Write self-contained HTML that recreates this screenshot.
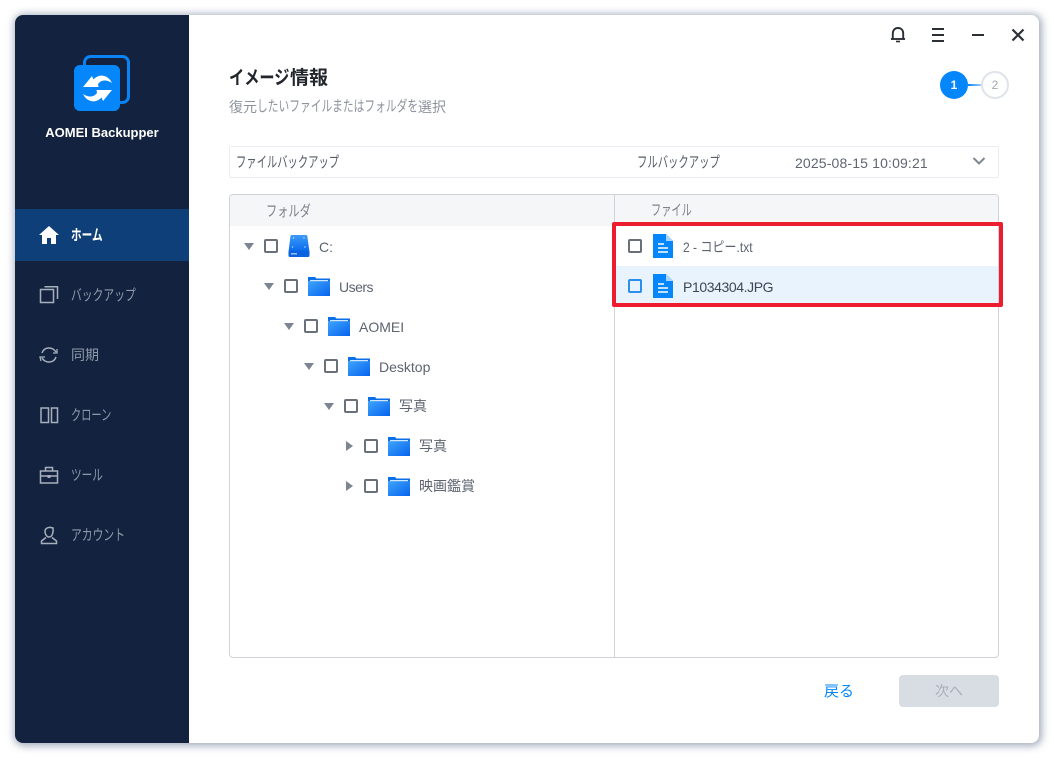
<!DOCTYPE html>
<html lang="ja">
<head>
<meta charset="utf-8">
<title>AOMEI Backupper</title>
<style>
html,body{margin:0;padding:0;width:1054px;height:758px;overflow:hidden;background:#fff;}
body{position:relative;font-family:"Liberation Sans","Noto Sans CJK JP",sans-serif;}
.t{position:absolute;white-space:nowrap;line-height:20px;height:20px;transform-origin:left center;}
.abs{position:absolute;}
#win{position:absolute;left:15px;top:15px;width:1024px;height:728px;border-radius:8px;background:#fff;box-shadow:1px 1px 8px 2px rgba(90,105,135,.55);overflow:hidden;}
#side{position:absolute;left:15px;top:15px;width:174px;height:728px;background:#13233f;border-radius:8px 0 0 8px;}
#active{position:absolute;left:15px;top:209px;width:174px;height:52px;background:#0e3f78;}
.nav{color:#8f99aa;font-size:15px;left:71px;}
.cb{position:absolute;width:10px;height:10px;border:2px solid #6a707a;border-radius:2px;background:#fff;}
.tr{position:absolute;width:0;height:0;}
.down{border-left:5.5px solid transparent;border-right:5.5px solid transparent;border-top:7px solid #7c8591;}
.right{border-top:5px solid transparent;border-bottom:5px solid transparent;border-left:7px solid #7c8591;}
.lbl{font-size:14px;color:#5d6470;}
</style>
</head>
<body>
<div id="win"></div>
<div id="side"></div>
<div id="active"></div>

<!-- logo -->
<svg class="abs" style="left:70px;top:52px" width="64" height="62" viewBox="0 0 64 62">
<rect x="14.5" y="4.500" width="44" height="46" rx="6" fill="none" stroke="#0a84f5" stroke-width="3"/>
<rect x="4" y="13" width="46" height="46" rx="6" fill="#0587fb"/>
<path d="M13 35 L22 24 L23.500 27.500 C29 21.500 38 22.500 42 31 C36 27 31 28 28 32 L28.500 35 Z" fill="#fff"/>
<path d="M13 35 L22 24 L23.500 27.500 C29 21.500 38 22.500 42 31 C36 27 31 28 28 32 L28.500 35 Z" fill="#fff" transform="rotate(180 27.5 36.5)"/>
</svg>
<div class="t" style="left:15px;width:174px;text-align:center;top:123px;color:#fff;font-size:13px;font-weight:bold;">AOMEI Backupper</div>

<!-- nav icons -->
<svg class="abs" style="left:38px;top:225px" width="22" height="20" viewBox="0 0 22 20"><path d="M11 1 L21 10 L18 10 L18 19 L13 19 L13 13 L9 13 L9 19 L4 19 L4 10 L1 10 Z" fill="#fff"/></svg>
<div class="t" style="left:71px;top:226px;color:#fff;font-size:15px;font-weight:bold;transform:scaleX(.71);">ホーム</div>

<svg class="abs" style="left:38px;top:284px" width="22" height="22" viewBox="0 0 22 22" fill="none" stroke="#a7afbc" stroke-width="1.500"><rect x="2.500" y="5.500" width="13" height="13"/><path d="M6.500 2.800 H19.500 V15"/></svg>
<div class="t nav" style="top:286px;transform:scaleX(.72);">バックアップ</div>

<svg class="abs" style="left:38px;top:344px" width="22" height="22" viewBox="0 0 22 22" fill="none" stroke="#a7afbc" stroke-width="1.500"><path d="M4 9 C6 3 14 2 18 8"/><path d="M18 13 C16 19 8 20 4 14"/><path d="M15 9 L19 9 L19 5" stroke-width="1.300"/><path d="M7 13 L2 13 L3 17" stroke-width="1.300"/></svg>
<div class="t nav" style="top:345px;font-size:14px;">同期</div>

<svg class="abs" style="left:38px;top:404px" width="22" height="22" viewBox="0 0 22 22" fill="none" stroke="#a7afbc" stroke-width="1.500"><rect x="3" y="4" width="7.500" height="14.500"/><rect x="13.500" y="4" width="6" height="14.500"/></svg>
<div class="t nav" style="top:406px;transform:scaleX(.68);">クローン</div>

<svg class="abs" style="left:38px;top:464px" width="22" height="22" viewBox="0 0 22 22" fill="none" stroke="#a7afbc" stroke-width="1.500"><rect x="2.500" y="7" width="17" height="12"/><path d="M7.500 7 V3.500 H14.500 V7"/><path d="M2.500 12 H19.500"/><rect x="9.500" y="11" width="3" height="3" fill="#a7afbc" stroke="none"/></svg>
<div class="t nav" style="top:466px;transform:scaleX(.71);">ツール</div>

<svg class="abs" style="left:38px;top:524px" width="22" height="22" viewBox="0 0 22 22" fill="none" stroke="#a7afbc" stroke-width="1.500"><path d="M7 7 C7 4.500 10 3 13 3.500 L15 4 C15.500 8 14.500 13 11 13 C8.500 13 7 10 7 7 Z"/><path d="M8 13.500 L3.500 17 V19.500 H18.500 V17 L14 13.500"/></svg>
<div class="t nav" style="top:526px;transform:scaleX(.72);">アカウント</div>

<!-- title bar icons -->
<svg class="abs" style="left:888px;top:25px" width="20" height="20" viewBox="0 0 20 20" fill="none" stroke="#2b2f36" stroke-width="1.900"><path d="M4.800 13.500 V8.500 C4.800 5 7 3 10 3 C13 3 15.200 5 15.200 8.500 V13.500"/><path d="M3 14 H17"/><path d="M8 16.500 H12" stroke-width="1.600"/></svg>
<svg class="abs" style="left:928px;top:25px" width="20" height="20" viewBox="0 0 20 20" fill="#2b2f36"><rect x="4" y="3" width="12" height="2"/><rect x="4" y="9" width="12" height="2"/><rect x="4" y="15" width="12" height="2"/></svg>
<svg class="abs" style="left:968px;top:25px" width="20" height="20" viewBox="0 0 20 20" fill="#2b2f36"><rect x="4" y="9" width="12" height="2"/></svg>
<svg class="abs" style="left:1008px;top:25px" width="20" height="20" viewBox="0 0 20 20" fill="none" stroke="#2b2f36" stroke-width="2.200"><path d="M4.500 4.500 L15.500 15.500 M15.500 4.500 L4.500 15.500"/></svg>

<!-- heading -->
<div class="t" style="left:229px;top:69px;font-size:19px;font-weight:bold;color:#22262c;transform:scaleX(.8);">イメージ</div>
<div class="t" style="left:290px;top:69px;font-size:19px;font-weight:bold;color:#22262c;">情報</div>
<div class="t" style="left:229px;top:97px;font-size:14px;color:#8e949d;">復元</div>
<div class="t" style="left:257px;top:97px;font-size:15px;color:#8e949d;transform:scaleX(.716);">したいファイルまたはフォルダを</div>
<div class="t" style="left:418px;top:97px;font-size:14px;color:#8e949d;">選択</div>

<!-- steps -->
<div class="abs" style="left:968px;top:84px;width:14px;height:2px;background:linear-gradient(90deg,#0587fb,#a9d3fb);"></div>
<div class="abs" style="left:940px;top:71px;width:28px;height:28px;border-radius:50%;background:#0587fb;color:#fff;font-size:12px;font-weight:bold;line-height:28px;text-align:center;">1</div>
<div class="abs" style="left:981px;top:71px;width:24px;height:24px;border-radius:50%;border:2px solid #dfe3ea;background:#fff;color:#a2a8b3;font-size:12px;line-height:24px;text-align:center;">2</div>

<!-- info row -->
<div class="abs" style="left:229px;top:146px;width:768px;height:30px;border:1px solid #e9ecf1;border-radius:2px;"></div>
<div class="t" style="left:236px;top:153px;font-size:15px;color:#555c67;transform:scaleX(.687);">ファイルバックアップ</div>
<div class="t" style="left:637px;top:153px;font-size:15px;color:#555c67;transform:scaleX(.69);">フルバックアップ</div>
<div class="t" style="left:795px;top:153px;font-size:14px;color:#5f6672;letter-spacing:.15px;">2025-08-15 10:09:21</div>
<svg class="abs" style="left:971px;top:155px" width="16" height="14" viewBox="0 0 16 14" fill="none" stroke="#7f8792" stroke-width="2"><path d="M2.500 3 L8 8.500 L13.500 3"/></svg>

<!-- panel -->
<div class="abs" style="left:229px;top:194px;width:768px;height:462px;border:1px solid #cfd2d6;border-radius:4px;"></div>
<div class="abs" style="left:230px;top:195px;width:768px;height:31px;background:#f5f6f7;border-radius:4px 4px 0 0;"></div>
<div class="abs" style="left:614px;top:195px;width:1px;height:462px;background:#cfd2d6;"></div>
<div class="t" style="left:266px;top:202px;font-size:15px;color:#7c828c;transform:scaleX(.747);">フォルダ</div>
<div class="t" style="left:651px;top:201px;font-size:15px;color:#7c828c;transform:scaleX(.68);">ファイル</div>

<svg width="0" height="0" style="position:absolute"><defs>
<linearGradient id="fg" x1="0" y1="0" x2="1" y2="1"><stop offset="0" stop-color="#3fa5fb"/><stop offset="1" stop-color="#0763ee"/></linearGradient>
<linearGradient id="g0" x1="0" y1="0" x2="0" y2="1"><stop offset="0" stop-color="#3d9bf8"/><stop offset="1" stop-color="#0668ee"/></linearGradient>
<g id="fo"><path d="M1 2 H8 L10 4 H1 Z" fill="#0a6fe8"/><rect x="1" y="3.500" width="22" height="3" fill="#0a6fe8"/><rect x="1" y="6" width="22" height="15" fill="url(#fg)"/><rect x="3" y="5" width="18" height="1.200" fill="#cfe6fd"/></g>
<g id="doc"><path d="M0 0 H13 L20 7 V24 H0 Z" fill="#0587fb"/><path d="M13 0 L20 7 H13 Z" fill="#a8d4fd"/><path d="M5 10 H11 M5 14 H15 M5 18 H15" stroke="#fff" stroke-width="1.600"/></g>
</defs></svg>

<!-- tree -->
<div class="tr down" style="left:244px;top:243px"></div>
<div class="cb" style="left:264px;top:239px"></div>
<svg class="abs" style="left:288px;top:235px" width="22" height="23" viewBox="0 0 22 23"><path d="M3.500 0 H18 Q19 0 19.300 1 L21.500 17 H0.500 L2.500 1 Q2.700 0 3.500 0 Z" fill="url(#g0)"/><rect x="0.500" y="15.500" width="21" height="6.500" rx="1.500" fill="#0a62e0"/><rect x="3" y="18" width="6" height="1.500" fill="#8fc4fa"/><circle cx="5.500" cy="3" r=".7" fill="#bfe0fd"/><circle cx="16" cy="3" r=".7" fill="#bfe0fd"/><circle cx="4.500" cy="12" r=".7" fill="#bfe0fd"/><circle cx="17" cy="12" r=".7" fill="#bfe0fd"/></svg>
<div class="t lbl" style="left:319px;top:237px;">C:</div>

<div class="tr down" style="left:264px;top:283px"></div>
<div class="cb" style="left:284px;top:279px"></div>
<svg class="abs" style="left:307px;top:275px" width="24" height="22" viewBox="0 0 24 22"><use href="#fo"/></svg>
<div class="t lbl" style="left:339px;top:277px;letter-spacing:-.5px;">Users</div>

<div class="tr down" style="left:284px;top:323px"></div>
<div class="cb" style="left:304px;top:319px"></div>
<svg class="abs" style="left:327px;top:315px" width="24" height="22" viewBox="0 0 24 22"><use href="#fo"/></svg>
<div class="t lbl" style="left:359px;top:317px;">AOMEI</div>

<div class="tr down" style="left:304px;top:363px"></div>
<div class="cb" style="left:324px;top:359px"></div>
<svg class="abs" style="left:347px;top:355px" width="24" height="22" viewBox="0 0 24 22"><use href="#fo"/></svg>
<div class="t lbl" style="left:379px;top:357px;">Desktop</div>

<div class="tr down" style="left:324px;top:403px"></div>
<div class="cb" style="left:344px;top:399px"></div>
<svg class="abs" style="left:367px;top:395px" width="24" height="22" viewBox="0 0 24 22"><use href="#fo"/></svg>
<div class="t lbl" style="left:399px;top:396px;">写真</div>

<div class="tr right" style="left:346px;top:441px"></div>
<div class="cb" style="left:364px;top:439px"></div>
<svg class="abs" style="left:387px;top:435px" width="24" height="22" viewBox="0 0 24 22"><use href="#fo"/></svg>
<div class="t lbl" style="left:419px;top:436px;">写真</div>

<div class="tr right" style="left:346px;top:481px"></div>
<div class="cb" style="left:364px;top:479px"></div>
<svg class="abs" style="left:387px;top:475px" width="24" height="22" viewBox="0 0 24 22"><use href="#fo"/></svg>
<div class="t lbl" style="left:419px;top:476px;">映画鑑賞</div>

<!-- files -->
<div class="abs" style="left:615px;top:266px;width:383px;height:40px;background:#e8f3fe;"></div>
<div class="cb" style="left:628px;top:239px"></div>
<svg class="abs" style="left:653px;top:234px" width="20" height="24" viewBox="0 0 20 24"><use href="#doc"/></svg>
<div class="t lbl" style="left:683px;top:237px;transform:scaleX(.86);">2 - コピー.txt</div>
<div class="cb" style="left:628px;top:279px;border-color:#2b8fee;background:#e8f3fe;"></div>
<svg class="abs" style="left:653px;top:274px" width="20" height="24" viewBox="0 0 20 24"><use href="#doc"/></svg>
<div class="t" style="left:683px;top:277px;font-size:14px;color:#3f4652;letter-spacing:-.4px;">P1034304.JPG</div>

<!-- red highlight -->
<div class="abs" style="left:612px;top:222px;width:383px;height:77px;border:4px solid #ed1c2e;border-radius:2px;"></div>

<!-- buttons -->
<div class="t" style="left:824px;top:682px;font-size:15px;color:#0587fb;">戻る</div>
<div class="abs" style="left:899px;top:675px;width:100px;height:32px;background:#d8dce3;border-radius:4px;color:#a8adb7;font-size:14px;line-height:32px;text-align:center;">次へ</div>
</body>
</html>
